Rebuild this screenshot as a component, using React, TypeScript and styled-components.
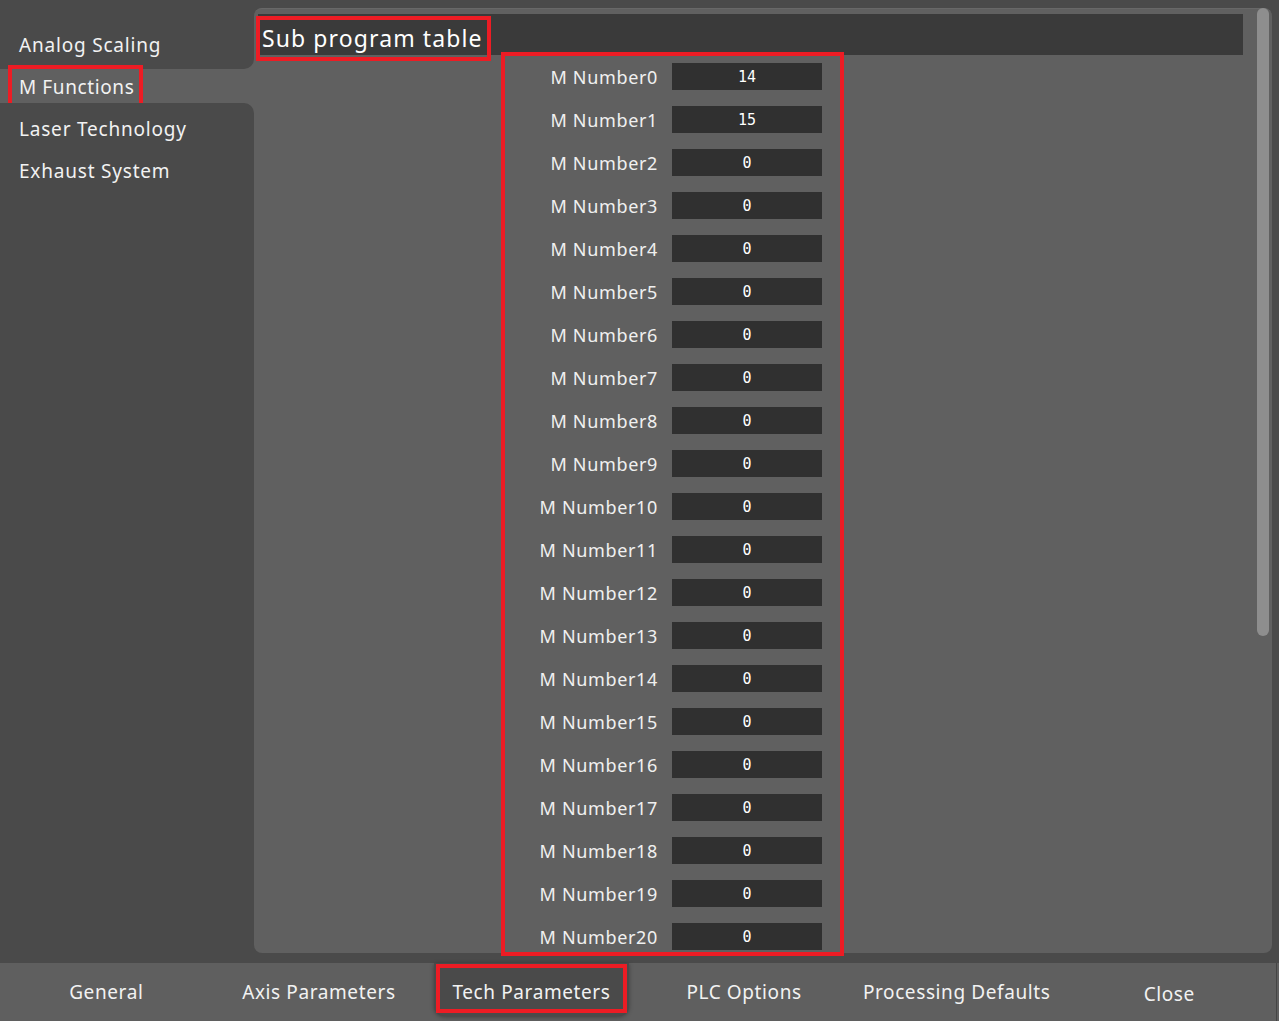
import React from "react";
import styled, { createGlobalStyle } from "styled-components";

const RED = "#ed1c24";
const DARK = "#4a4a4a";
const PANEL = "#606060";

const Global = createGlobalStyle`
  html, body { margin: 0; padding: 0; background: ${DARK}; }
  body { font-family: "Noto Sans", "Open Sans", sans-serif; color: #f2f2f2; }
  * { box-sizing: border-box; }
`;

const Screen = styled.div`
  width: 1279px;
  height: 1021px;
  display: flex;
  flex-direction: column;
  background: ${DARK};
  overflow: hidden;
`;

const Body = styled.div`
  height: 963px;
  display: flex;
`;

const Sidebar = styled.nav`
  width: 254px;
  display: flex;
  flex-direction: column;
  background: ${PANEL};
`;

const SideGroup = styled.div<{ $pos: "top" | "bottom" }>`
  background: ${DARK};
  display: flex;
  flex-direction: column;
  padding: ${(p) => (p.$pos === "top" ? "24px 0 3px" : "5px 0 0")};
  border-bottom-right-radius: ${(p) => (p.$pos === "top" ? "10px" : "0")};
  border-top-right-radius: ${(p) => (p.$pos === "bottom" ? "10px" : "0")};
  flex: ${(p) => (p.$pos === "bottom" ? 1 : "none")};
`;

const SideItem = styled.div`
  height: 42px;
  line-height: 42px;
  padding-left: 19px;
  font-size: 19px;
  letter-spacing: 0.8px;
  color: #f2f2f2;
  white-space: nowrap;
`;

const SelectedItem = styled.div`
  height: 34px;
  padding-left: 8px;
  display: flex;
  align-items: flex-start;
  overflow: visible;
`;

const Marked = styled.span`
  display: inline-block;
  margin-top: -4px;
  height: 42px;
  line-height: 36px;
  padding: 0 5px 0 7px;
  border: 4px solid ${RED};
  font-size: 19px;
  letter-spacing: 0.6px;
  color: #f2f2f2;
  white-space: nowrap;
`;

const Panel = styled.main`
  flex: 1;
  margin: 8px 7px 10px 0;
  background: ${PANEL};
  border-radius: 8px;
  border-top: 1px solid #686868;
  position: relative;
  display: flex;
  flex-direction: column;
`;

const HeaderBar = styled.div`
  height: 41px;
  margin: 5px 29px 0 4px;
  background: #3a3a3a;
  display: flex;
  align-items: flex-start;
  position: relative;
  z-index: 1;
`;

const HeaderTitle = styled.span`
  margin: 2px 0 0 -2px;
  height: 45px;
  line-height: 36px;
  padding: 0 4px 0 2px;
  border: 4px solid ${RED};
  font-size: 23px;
  letter-spacing: 1.1px;
  color: #ffffff;
  white-space: nowrap;
`;

const Table = styled.div`
  margin: -3px 0 0 247px;
  width: 343px;
  border: 4px solid ${RED};
  padding: 7px 18px 2px 0;
  display: flex;
  flex-direction: column;
  gap: 16px;
  position: relative;
  z-index: 2;
`;

const Row = styled.div`
  height: 27px;
  display: grid;
  grid-template-columns: 153px 150px;
  column-gap: 14px;
  align-items: center;
`;

const Label = styled.span`
  text-align: right;
  font-size: 18px;
  letter-spacing: 0.65px;
  color: #f0f0f0;
  white-space: nowrap;
`;

const Value = styled.div`
  height: 27px;
  padding-top: 2px;
  background: #303030;
  color: #ffffff;
  font-family: "DejaVu Sans Mono", "Liberation Mono", monospace;
  font-size: 15px;
  line-height: 25px;
  text-align: center;
`;

const Scrollbar = styled.div`
  position: absolute;
  top: -1px;
  right: 3px;
  width: 12px;
  height: 628px;
  border-radius: 6px;
  background: #8e8e8e;
`;

const TabBar = styled.footer`
  height: 58px;
  background: #5f5f5f;
  display: grid;
  grid-template-columns: repeat(6, 212.6px) 3px;
`;

const Tab = styled.div<{ $low?: boolean }>`
  display: flex;
  justify-content: center;
  align-items: flex-start;
  padding-top: ${(p) => (p.$low ? "18px" : "16px")};
  font-size: 19px;
  letter-spacing: 0.6px;
  color: #f2f2f2;
  white-space: nowrap;
`;

const ActiveTab = styled.div`
  display: flex;
  justify-content: center;
  align-items: flex-start;
`;

const ActiveChip = styled.div`
  width: 195px;
  height: 53px;
  padding: 1px 2px 3px 2px;
  background: ${DARK};
  border-radius: 0 0 10px 10px;
  box-shadow: 0 1px 4px rgba(0, 0, 0, 0.35);
`;

const ActiveLabel = styled.div`
  height: 49px;
  border: 4px solid ${RED};
  display: flex;
  justify-content: center;
  padding-top: 11px;
  font-size: 19px;
  letter-spacing: 0.6px;
  color: #f2f2f2;
  white-space: nowrap;
`;

const EdgeLine = styled.div`
  border-left: 1px solid #454545;
`;

const values = ["14", "15"];

export default function App() {
  const rows = Array.from({ length: 21 }, (_, i) => ({
    label: `M Number${i}`,
    value: values[i] ?? "0",
  }));
  return (
    <>
      <Global />
      <Screen>
        <Body>
          <Sidebar>
            <SideGroup $pos="top">
              <SideItem>Analog Scaling</SideItem>
            </SideGroup>
            <SelectedItem>
              <Marked>M Functions</Marked>
            </SelectedItem>
            <SideGroup $pos="bottom">
              <SideItem>Laser Technology</SideItem>
              <SideItem>Exhaust System</SideItem>
            </SideGroup>
          </Sidebar>
          <Panel>
            <HeaderBar>
              <HeaderTitle>Sub program table</HeaderTitle>
            </HeaderBar>
            <Table>
              {rows.map((r) => (
                <Row key={r.label}>
                  <Label>{r.label}</Label>
                  <Value>{r.value}</Value>
                </Row>
              ))}
            </Table>
            <Scrollbar />
          </Panel>
        </Body>
        <TabBar>
          <Tab>General</Tab>
          <Tab>Axis Parameters</Tab>
          <ActiveTab>
            <ActiveChip>
              <ActiveLabel>Tech Parameters</ActiveLabel>
            </ActiveChip>
          </ActiveTab>
          <Tab>PLC Options</Tab>
          <Tab>Processing Defaults</Tab>
          <Tab $low>Close</Tab>
          <EdgeLine />
        </TabBar>
      </Screen>
    </>
  );
}
